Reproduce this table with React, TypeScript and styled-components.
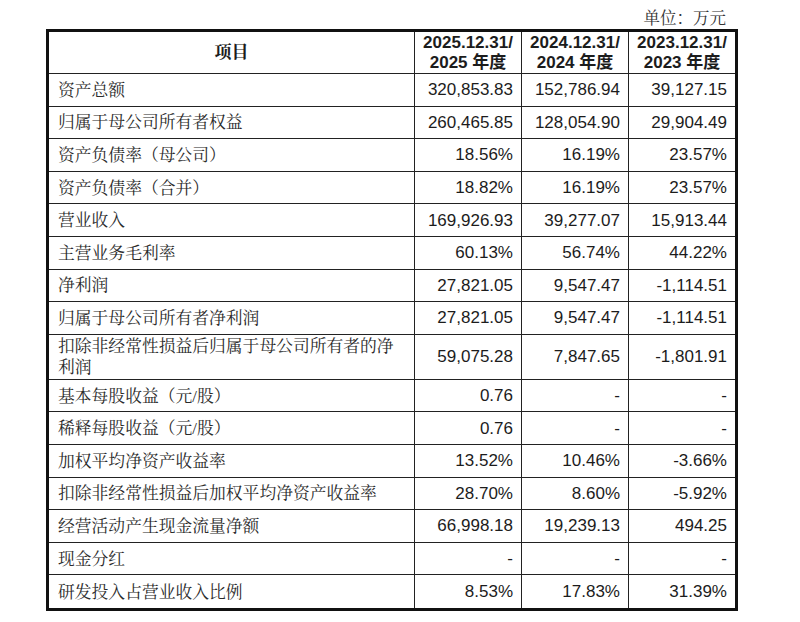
import React from "react";
import styled, { createGlobalStyle } from "styled-components";

const Global = createGlobalStyle`
  html, body { margin: 0; padding: 0; background: #ffffff; }
  body { width: 800px; height: 622px; overflow: hidden; }
`;

const Page = styled.div`
  padding: 0 0 0 46px;
  width: 800px;
  box-sizing: border-box;
`;

const Unit = styled.div`
  width: 692px;
  height: 29px;
  box-sizing: border-box;
  display: flex;
  align-items: center;
  justify-content: flex-end;
  padding: 4px 12px 0 0;
  font-family: "Liberation Serif", "Noto Serif CJK SC", "Noto Sans CJK SC", serif;
  font-size: 16.5px;
  color: #333;
`;

const Table = styled.table`
  border-collapse: separate;
  border-spacing: 0;
  border: 3px solid #111;
  table-layout: fixed;
  width: 692px;
  color: #1c1c1c;
`;

const Col = styled.col<{ $w: number }>`
  width: ${(p) => p.$w}px;
`;

const Cell = styled.td<{ $last?: boolean; $bottom?: boolean }>`
  box-sizing: border-box;
  border-right: ${(p) => (p.$last ? "none" : "1px solid #222")};
  border-bottom: ${(p) => (p.$bottom ? "none" : "1px solid #222")};
  padding: 0 8px 0 9px;
  vertical-align: middle;
`;

const HeadCell = styled(Cell)`
  height: 42px;
  text-align: center;
  font-family: "Liberation Sans", "Noto Sans CJK SC", sans-serif;
  font-weight: bold;
  font-size: 17px;
  line-height: 20px;
  padding: 0 4px;
`;

const ItemHead = styled(HeadCell)`
  font-family: "Liberation Serif", "Noto Serif CJK SC", "Noto Sans CJK SC", serif;
`;

const Label = styled(Cell)<{ $tall?: boolean }>`
  height: ${(p) => (p.$tall ? "45px" : "32.6px")};
  font-family: "Liberation Serif", "Noto Serif CJK SC", "Noto Sans CJK SC", serif;
  font-size: 16.8px;
  line-height: 21px;
  color: #2a2a2a;
  padding-top: 1px;
`;

const Num = styled(Cell)`
  text-align: right;
  font-family: "Liberation Sans", Arial, sans-serif;
  font-size: 17px;
  line-height: 20px;
  padding-top: 1px;
`;

type Row = { label: string; v: [string, string, string]; tall?: boolean };

const rows: Row[] = [
  { label: "资产总额", v: ["320,853.83", "152,786.94", "39,127.15"] },
  { label: "归属于母公司所有者权益", v: ["260,465.85", "128,054.90", "29,904.49"] },
  { label: "资产负债率（母公司）", v: ["18.56%", "16.19%", "23.57%"] },
  { label: "资产负债率（合并）", v: ["18.82%", "16.19%", "23.57%"] },
  { label: "营业收入", v: ["169,926.93", "39,277.07", "15,913.44"] },
  { label: "主营业务毛利率", v: ["60.13%", "56.74%", "44.22%"] },
  { label: "净利润", v: ["27,821.05", "9,547.47", "-1,114.51"] },
  { label: "归属于母公司所有者净利润", v: ["27,821.05", "9,547.47", "-1,114.51"] },
  {
    label: "扣除非经常性损益后归属于母公司所有者的净利润",
    v: ["59,075.28", "7,847.65", "-1,801.91"],
    tall: true,
  },
  { label: "基本每股收益（元/股）", v: ["0.76", "-", "-"] },
  { label: "稀释每股收益（元/股）", v: ["0.76", "-", "-"] },
  { label: "加权平均净资产收益率", v: ["13.52%", "10.46%", "-3.66%"] },
  { label: "扣除非经常性损益后加权平均净资产收益率", v: ["28.70%", "8.60%", "-5.92%"] },
  { label: "经营活动产生现金流量净额", v: ["66,998.18", "19,239.13", "494.25"] },
  { label: "现金分红", v: ["-", "-", "-"] },
  { label: "研发投入占营业收入比例", v: ["8.53%", "17.83%", "31.39%"] },
];

const years = ["2025", "2024", "2023"];
const widths = [366, 107, 107, 106];

export default function App() {
  return (
    <>
      <Global />
      <Page>
        <Unit>单位：万元</Unit>
        <Table>
          <colgroup>
            {widths.map((w, i) => (
              <Col key={i} $w={w} />
            ))}
          </colgroup>
          <thead>
            <tr>
              <ItemHead as="th">项目</ItemHead>
              {years.map((y, i) => (
                <HeadCell as="th" key={y} $last={i === years.length - 1}>
                  {y}.12.31/
                  <br />
                  {y} 年度
                </HeadCell>
              ))}
            </tr>
          </thead>
          <tbody>
            {rows.map((r, ri) => {
              const bottom = ri === rows.length - 1;
              return (
                <tr key={r.label}>
                  <Label $tall={r.tall} $bottom={bottom}>
                    {r.label}
                  </Label>
                  {r.v.map((val, vi) => (
                    <Num key={vi} $last={vi === 2} $bottom={bottom}>
                      {val}
                    </Num>
                  ))}
                </tr>
              );
            })}
          </tbody>
        </Table>
      </Page>
    </>
  );
}
